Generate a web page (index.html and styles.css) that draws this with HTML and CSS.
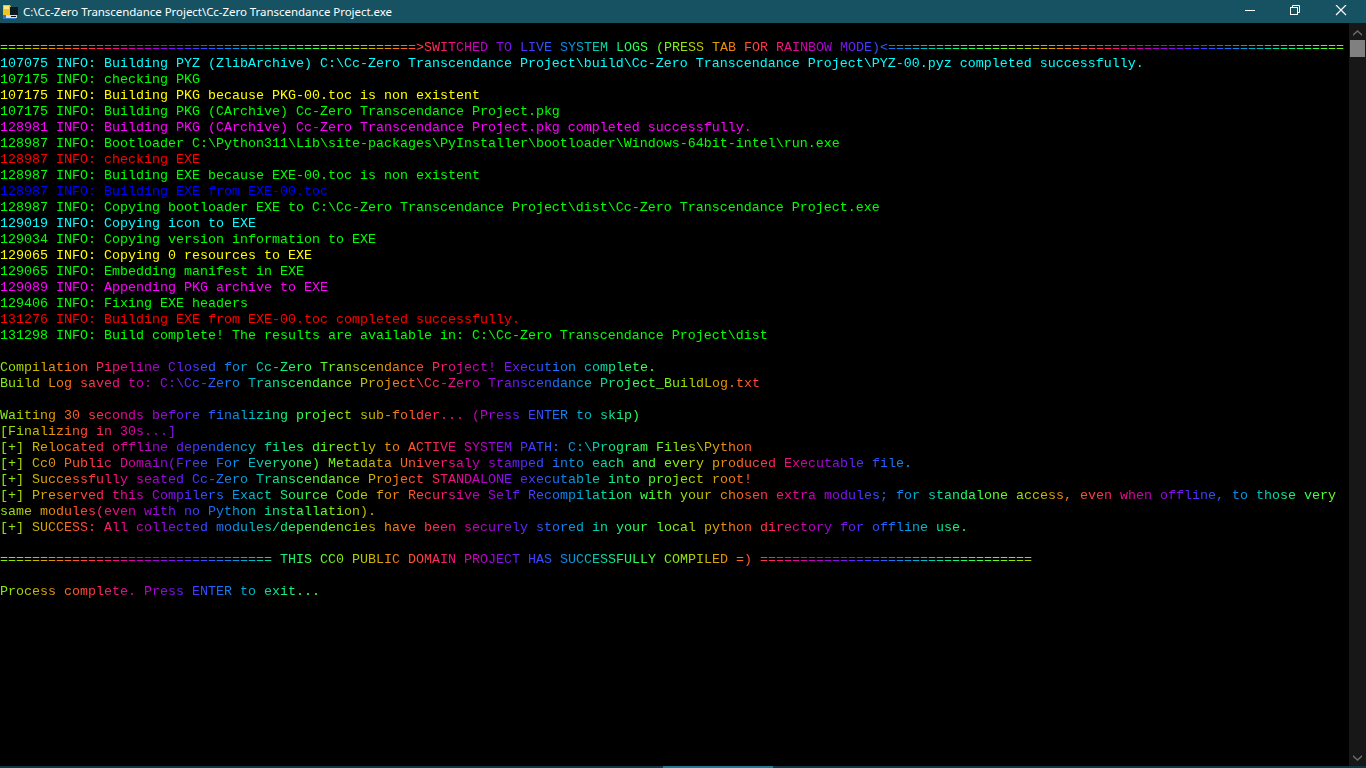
FILE: index.html
```html
<!DOCTYPE html>
<html>
<head>
<meta charset="UTF-8">
<title>Cc-Zero Transcendance Project</title>
<link rel="stylesheet" href="styles.css">
</head>

<body>

<div class="window">

  <!-- TITLE BAR -->
  <div class="titlebar">
    <svg class="appicon" width="16" height="16" viewBox="0 0 16 16">
      <path d="M0 10 L0 15 L13 15 L13 10 Z" fill="#2f78c8"/>
      <path d="M3 11 L14 11 L14 14 L3 14 Z" fill="#dcdcd4"/>
      <path d="M0 1 L7 1 L8 3 L8 11 L0 11 Z" fill="#f2c21f"/>
      <path d="M7 3 L15 3 L15 11 L7 11 Z" fill="#10181f"/>
      <path d="M1 2 L6 2 L6 5 L1 5 Z" fill="#ffe680"/>
      <path d="M8 12 L13 12 L13 13 L8 13 Z" fill="#111"/>
    </svg>
    <span class="wintitle">C:\Cc-Zero Transcendance Project\Cc-Zero Transcendance Project.exe</span>
    <div class="winbtns">
      <div class="winbtn">
        <svg width="12" height="12" viewBox="0 0 12 12"><path d="M2 5.5 H12" stroke="#fff" stroke-width="1"/></svg>
      </div>
      <div class="winbtn">
        <svg width="12" height="12" viewBox="0 0 12 12" fill="none" stroke="#fff"><rect x="1.5" y="2.5" width="7" height="7"/><path d="M3.5 2.5 V0.5 H10.5 V7.5 H8.5"/></svg>
      </div>
      <div class="winbtn">
        <svg width="12" height="12" viewBox="0 0 12 12" stroke="#fff" stroke-width="1.2"><path d="M1 0 L11 10 M11 0 L1 10"/></svg>
      </div>
    </div>
  </div>

  <div class="content">

    <!-- CONSOLE OUTPUT -->
    <div class="console">
      <div class="line rainbow">====================================================&gt;SWITCHED TO LIVE SYSTEM LOGS (PRESS TAB FOR RAINBOW MODE)&lt;=========================================================</div>
      <div class="line cyan">107075 INFO: Building PYZ (ZlibArchive) C:\Cc-Zero Transcendance Project\build\Cc-Zero Transcendance Project\PYZ-00.pyz completed successfully.</div>
      <div class="line green">107175 INFO: checking PKG</div>
      <div class="line yellow">107175 INFO: Building PKG because PKG-00.toc is non existent</div>
      <div class="line green">107175 INFO: Building PKG (CArchive) Cc-Zero Transcendance Project.pkg</div>
      <div class="line magenta">128981 INFO: Building PKG (CArchive) Cc-Zero Transcendance Project.pkg completed successfully.</div>
      <div class="line green">128987 INFO: Bootloader C:\Python311\Lib\site-packages\PyInstaller\bootloader\Windows-64bit-intel\run.exe</div>
      <div class="line red">128987 INFO: checking EXE</div>
      <div class="line green">128987 INFO: Building EXE because EXE-00.toc is non existent</div>
      <div class="line blue">128987 INFO: Building EXE from EXE-00.toc</div>
      <div class="line green">128987 INFO: Copying bootloader EXE to C:\Cc-Zero Transcendance Project\dist\Cc-Zero Transcendance Project.exe</div>
      <div class="line cyan">129019 INFO: Copying icon to EXE</div>
      <div class="line green">129034 INFO: Copying version information to EXE</div>
      <div class="line yellow">129065 INFO: Copying 0 resources to EXE</div>
      <div class="line green">129065 INFO: Embedding manifest in EXE</div>
      <div class="line magenta">129089 INFO: Appending PKG archive to EXE</div>
      <div class="line green">129406 INFO: Fixing EXE headers</div>
      <div class="line red">131276 INFO: Building EXE from EXE-00.toc completed successfully.</div>
      <div class="line green">131298 INFO: Build complete! The results are available in: C:\Cc-Zero Transcendance Project\dist</div>
      <div class="line">&nbsp;</div>
      <div class="line rainbow">Compilation Pipeline Closed for Cc-Zero Transcendance Project! Execution complete.</div>
      <div class="line rainbow">Build Log saved to: C:\Cc-Zero Transcendance Project\Cc-Zero Transcendance Project_BuildLog.txt</div>
      <div class="line">&nbsp;</div>
      <div class="line rainbow">Waiting 30 seconds before finalizing project sub-folder... (Press ENTER to skip)</div>
      <div class="line rainbow">[Finalizing in 30s...]</div>
      <div class="line rainbow">[+] Relocated offline dependency files directly to ACTIVE SYSTEM PATH: C:\Program Files\Python</div>
      <div class="line rainbow">[+] Cc0 Public Domain(Free For Everyone) Metadata Universaly stamped into each and every produced Executable file.</div>
      <div class="line rainbow">[+] Successfully seated Cc-Zero Transcendance Project STANDALONE executable into project root!</div>
      <div class="line rainbow">[+] Preserved this Compilers Exact Source Code for Recursive Self Recompilation with your chosen extra modules; for standalone access, even when offline, to those very same modules(even with no Python installation).</div>
      <div class="line rainbow">[+] SUCCESS: All collected modules/dependencies have been securely stored in your local python directory for offline use.</div>
      <div class="line">&nbsp;</div>
      <div class="line rainbow">================================== THIS CC0 PUBLIC DOMAIN PROJECT HAS SUCCESSFULLY COMPILED =) ==================================</div>
      <div class="line">&nbsp;</div>
      <div class="line rainbow">Process complete. Press ENTER to exit...</div>
    </div>

    <!-- SCROLLBAR -->
    <div class="scrollbar">
      <svg class="arrow" width="9" height="7" viewBox="0 0 9 7"><path d="M0 5 L4.5 1 L9 5 L9 7 L4.5 3 L0 7 Z" fill="#6a6a6a"/></svg>
      <div class="thumb"></div>
      <svg class="arrow arrow-down" width="9" height="7" viewBox="0 0 9 7"><path d="M0 0 L4.5 4 L9 0 L9 2 L4.5 6 L0 2 Z" fill="#6a6a6a"/></svg>
    </div>
  </div>

  <!-- TASKBAR EDGE -->
  <div class="edge"><div class="edge-active"></div></div>
</div>

<script src="app.js"></script>
</body>
</html>
```

FILE: styles.css
```css
html,body{margin:0;height:100%;overflow:hidden;background:#000}
.window{display:flex;flex-direction:column;height:768px;width:1366px}

.titlebar{
  display:flex; align-items:center; flex:0 0 23px;
  background:#165262; color:#fff;
  font-family:"Noto Sans","Open Sans",sans-serif; font-size:11.5px;
}
.appicon{margin:0 4px 0 3px;flex:none}
.wintitle{white-space:nowrap;letter-spacing:-.045px}
.winbtns{display:flex;margin-left:auto;margin-right:2px}
.winbtn{width:46px;height:22px;padding-bottom:1px;display:flex;align-items:center;justify-content:center}

.content{display:flex;flex:1;min-height:0}
/* own layer, so the text gets plain grey antialiasing and pure colours */
.console{
  flex:0 0 1344px; width:1344px; padding-top:17px;
  font-family:"Liberation Mono","DejaVu Sans Mono",monospace;
  font-size:13.33px; line-height:16px; color:#ccc;
  will-change:transform;
}
.line{white-space:pre-wrap;word-break:break-all}

.cyan{color:#00ffff}
.green{color:#00ff00}
.yellow{color:#ffff00}
.magenta{color:#ff00ff}
.red{color:#ff0000}
.blue{color:#0000ff}

.scrollbar{
  margin-left:auto; width:17px; background:#171717;
  display:flex; flex-direction:column; align-items:center;
}
.arrow{margin-top:6px;flex:none}
.arrow-down{margin:auto 0 4px}
.thumb{width:15px;height:17px;margin-top:4px;background:#808080}

.edge{flex:0 0 2px;background:#0c3743}
.edge-active{width:110px;height:2px;margin-left:663px;background:#1c7c93}
```

FILE: app.js
```js
/* RAINBOW LINES: one colour per character, same phase on every line */
const FREQ = 0.15;

function wave(i,shift){
  return Math.round(Math.sin(FREQ*i+shift)*127+128);
}

document.querySelectorAll(".rainbow").forEach(function(line){
  const text = line.textContent;
  line.textContent = "";
  for(let i=0;i<text.length;i++){
    const s = document.createElement("span");
    s.textContent = text[i];
    s.style.color = "rgb("+wave(i,0)+","+wave(i,2*Math.PI/3)+","+wave(i,4*Math.PI/3)+")";
    line.appendChild(s);
  }
});
```
